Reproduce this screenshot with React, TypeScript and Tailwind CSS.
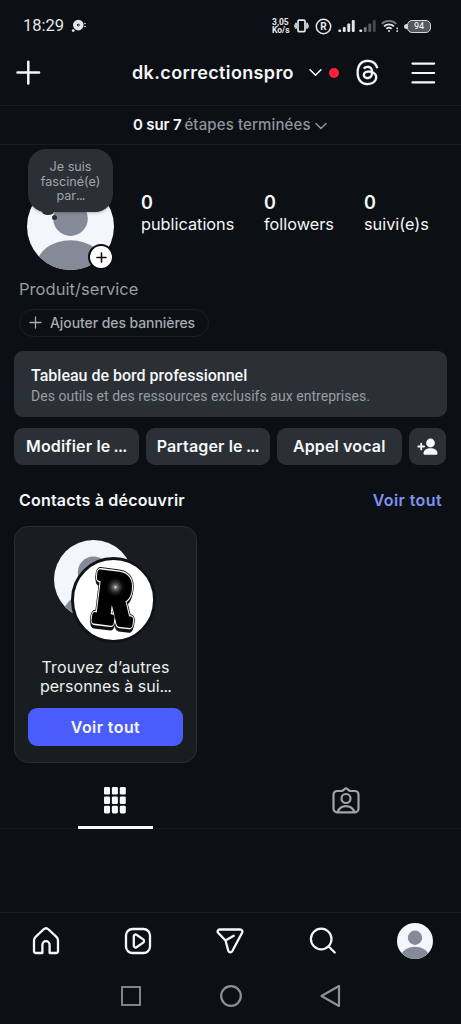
import React from 'react';
import { FaThreads } from 'react-icons/fa6';

const stats = [
    { value: '0', label: 'publications', className: 'w-[123px]' },
    { value: '0', label: 'followers', className: 'w-[100px]' },
    { value: '0', label: 'suivi(e)s', className: 'w-[70px]' },
];

const actions = [
    { label: 'Modifier le', cut: true },
    { label: 'Partager le', cut: true },
    { label: 'Appel vocal', cut: false },
];

function Avatar({ className }: { className?: string }) {
    return (
        <div className={`rounded-full overflow-hidden bg-[#f3f6fa] ${className}`}>
            <svg viewBox="0 0 88 88" className="block w-full h-full" fill="#858a99">
                <circle cx="44" cy="36" r="17.5" />
                <ellipse cx="44" cy="83" rx="34" ry="25" />
            </svg>
        </div>
    );
}

function Chevron({ className }: { className?: string }) {
    return (
        <svg viewBox="0 0 12 8" className={className} fill="none" stroke="currentColor" strokeWidth="1.5" strokeLinecap="round" strokeLinejoin="round">
            <path d="M1 1.5L6 6.5L11 1.5" />
        </svg>
    );
}

function Signal({ bars }: { bars: string[] }) {
    return (
        <svg width="17" height="14" viewBox="0 0 17 14">
            {bars.map((color, i) => (
                <rect key={i} x={0.3 + i * 4.5} y={[10.5, 8, 4.5, 1][i]} width="2.9" height={[2.5, 5, 8.5, 12][i]} rx="1" fill={color} />
            ))}
        </svg>
    );
}

function StatusBar() {
    return (
        <div className="h-[45px] pt-[7px] pl-[23px] pr-[30px] flex items-center text-[#e4e6e9] font-[Roboto,sans-serif]">
            <span className="text-[16.5px] leading-none w-[40px] pt-px">18:29</span>
            <svg className="ml-2" width="15" height="14" viewBox="0 0 15 14" fill="currentColor">
                <path fillRule="evenodd" d="M7.3 .8a5.3 5.3 0 1 1 0 10.6A5.3 5.3 0 0 1 7.3 .8zm0 3.9a1.4 1.4 0 1 0 0 2.8 1.4 1.4 0 0 0 0-2.8z" />
                <circle cx="7.3" cy="6.1" r=".7" />
                <circle cx="2.2" cy="11.6" r="1.4" />
                <circle cx="14" cy="4.5" r=".8" />
                <circle cx="14" cy="7.5" r=".8" />
            </svg>
            <div className="ml-auto flex items-center">
                <div className="w-[19px] text-[8.5px] leading-[8px] font-bold whitespace-nowrap">
                    <div>3,05</div>
                    <div>Ko/s</div>
                </div>
                <svg className="ml-[3px]" width="15" height="14" viewBox="0 0 15 14" fill="none" stroke="currentColor" strokeWidth="1.7">
                    <rect x="4" y="1.2" width="7" height="11.4" rx="1" />
                    <path d="M2 3.8v6M13 3.8v6" />
                    <path d="M.4 5.5v3M14.6 5.5v3" strokeWidth=".8" />
                </svg>
                <svg className="ml-[6px]" width="17" height="17" viewBox="0 0 17 17">
                    <circle cx="8.5" cy="8.5" r="7.2" fill="none" stroke="currentColor" strokeWidth="1.5" />
                    <text x="8.5" y="12" textAnchor="middle" fontSize="10" fontWeight="700" fill="currentColor">R</text>
                </svg>
                <div className="ml-[6px]"><Signal bars={['#e4e6e9', '#e4e6e9', '#e4e6e9', '#e4e6e9']} /></div>
                <div className="ml-[4px]"><Signal bars={['#e4e6e9', '#74777b', '#55585c', '#44474b']} /></div>
                <svg className="ml-[5px]" width="18" height="14" viewBox="0 0 18 14" fill="none" stroke="currentColor" strokeWidth="1.8">
                    <path d="M.8 4.8a10.2 10.2 0 0 1 14.4 0" stroke="#7b7e82" />
                    <path d="M3 7.4a7.1 7.1 0 0 1 10 0M5.4 9.8a3.7 3.7 0 0 1 5.2 0" />
                    <circle cx="8" cy="12" r="1" fill="currentColor" stroke="none" />
                    <path d="M16.2 8.5v1.8M16.2 11.3v1.8" strokeWidth="1.4" />
                </svg>
                <div className="ml-[5px] w-[3px] h-[5px] rounded-l bg-[#d6d8da]" />
                <div className="w-[24px] h-[13px] rounded-[5px] border-[1.5px] border-[#d6d8da] bg-[#55585c] text-[9px] leading-[11px] font-medium text-center">94</div>
            </div>
        </div>
    );
}

function Header() {
    return (
        <div className="h-[61px] pb-[5px] pl-4 pr-[25px] flex items-center border-b border-[#191d21]">
            <svg width="25" height="25" viewBox="0 0 25 25" fill="none" stroke="currentColor" strokeWidth="2.5" strokeLinecap="round">
                <path d="M12.3 1.8v21.6M1.5 12.6h21.6" />
            </svg>
            <span className="ml-[91px] w-[163px] text-[18px] font-semibold tracking-[0.36px] whitespace-nowrap">dk.correctionspro</span>
            <Chevron className="ml-[14px] w-[13px] h-[9px]" />
            <span className="ml-[7px] w-[10px] h-[10px] rounded-full bg-[#ff1f3c]" />
            <FaThreads className="ml-[15px] w-[27px] h-[27px]" stroke="currentColor" strokeWidth="3" />
            <svg className="ml-auto" width="25" height="24" viewBox="0 0 25 24" fill="none" stroke="currentColor" strokeWidth="2.2" strokeLinecap="round">
                <path d="M1.5 2.6h21.6M1.5 12h21.6M1.5 21.4h21.6" />
            </svg>
        </div>
    );
}

function ProfileHead() {
    return (
        <div className="h-[126px] pl-[27px] flex">
            <div className="relative w-[114px] pt-[38px]">
                <Avatar className="w-[87px] h-[87px]" />
                <div className="absolute left-[1px] top-1 w-[85px] h-[63px] rounded-[18px] bg-[#2b2f36] pt-[11px] text-[12.6px] leading-[14.5px] text-center text-[#a0a5ad] shadow-[0_1px_3px_rgba(0,0,0,0.25)]">
                    <div>Je suis</div>
                    <div>fasciné(e)</div>
                    <div>par<span className="tracking-[-0.8px]">...</span></div>
                </div>
                <span className="absolute left-[14px] top-[58px] w-[14px] h-[12px] rounded-full bg-[#2b2f36]" />
                <span className="absolute left-[25px] top-[70px] w-[5px] h-[5px] rounded-full bg-[#2b2f36]" />
                <span className="absolute left-[61px] top-[99px] w-[26px] h-[26px] rounded-full border-[2.5px] border-[#0c1014] bg-white flex items-center justify-center">
                    <svg width="11" height="11" viewBox="0 0 11 11" stroke="#0c1014" strokeWidth="1.6" strokeLinecap="round">
                        <path d="M5.5 1v9M1 5.5h9" />
                    </svg>
                </span>
            </div>
            <div className="flex pt-[46px]">
                {stats.map((stat) => (
                    <div key={stat.label} className={`whitespace-nowrap ${stat.className}`}>
                        <div className="text-[18px] leading-[23px] font-semibold">{stat.value}</div>
                        <div className="text-[16.3px] leading-[21px]">{stat.label}</div>
                    </div>
                ))}
            </div>
        </div>
    );
}

function DiscoverCard() {
    return (
        <div className="ml-[14px] w-[183px] h-[237px] rounded-[14px] border border-[#2a2e31] bg-[#191d20] px-[13px] flex flex-col">
            <div className="relative h-[128px]">
                <Avatar className="absolute left-[26px] top-[13px] w-[79px] h-[79px]" />
                <div className="absolute left-[43px] top-[30px] w-[85px] h-[86px] rounded-full border-[3px] border-[#0f1317] bg-white">
                    <svg viewBox="0 0 80 80" className="w-full h-full overflow-visible">
                        <defs>
                            <radialGradient id="spark">
                                <stop offset="0" stopColor="#fff" />
                                <stop offset="0.15" stopColor="#999" stopOpacity="0.8" />
                                <stop offset="0.5" stopColor="#555" stopOpacity="0.4" />
                                <stop offset="1" stopColor="#000" stopOpacity="0" />
                            </radialGradient>
                        </defs>
                        <g transform="translate(37.500 62) rotate(7) scale(.74 1.05)" fontFamily="DejaVu Serif, serif" fontWeight="700" fontSize="62" textAnchor="middle" strokeLinejoin="round">
                            <text y="3.500" stroke="#111" strokeWidth="10" fill="#111">R</text>
                            <text stroke="#111" strokeWidth="12" fill="#111">R</text>
                            <text stroke="#fff" strokeWidth="10" fill="#fff">R</text>
                            <text stroke="#000" strokeWidth="7.500" fill="#000">R</text>
                        </g>
                        <ellipse cx="42" cy="27" rx="6" ry="8" fill="#0a0a0a" />
                        <circle cx="42" cy="27" r="11" fill="url(#spark)" />
                    </svg>
                </div>
            </div>
            <div className="h-[39px] text-[16px] leading-[19px] text-center whitespace-nowrap text-[#eceef0] pt-[3px]">
                <div className="tracking-[0.15px]">Trouvez d’autres</div>
                <div>personnes à sui<span className="tracking-[-0.8px]">...</span></div>
            </div>
            <button className="mt-[14px] h-[38px] rounded-[9px] bg-[#4a5dfa] text-[16px] font-semibold tracking-[0.4px] pb-px">Voir tout</button>
        </div>
    );
}

function ProfileTabs() {
    return (
        <div className="h-[66px] flex border-b border-[#15191d]">
            <div className="flex-1 flex flex-col items-center justify-end">
                <svg className="mb-[12px]" width="22" height="27" viewBox="0 0 22 27" fill="#f7f9fb">
                    {[0, 1, 2].map((row) =>
                        [0, 1, 2].map((col) => (
                            <rect key={`${row}${col}`} x={col * 7.9} y={row * 9.4} width="6" height="7.6" rx="1.3" />
                        ))
                    )}
                </svg>
                <div className="w-[75px] h-[3px] -mb-px bg-[#f7f9fb]" />
            </div>
            <div className="flex-1 flex justify-center pt-[23px]">
                <svg width="28" height="28" viewBox="0 0 28 28" fill="none" stroke="#a0a4ab" strokeWidth="2.2" strokeLinejoin="round" strokeLinecap="round">
                    <path d="M5 5h4.5c1.5 0 1.8-.7 2.8-1.7 1.1-1.1 2.3-1.1 3.4 0 1 1 1.3 1.7 2.8 1.7H23a3.5 3.5 0 0 1 3.5 3.5v14.3a3.5 3.5 0 0 1-3.5 3.5H5a3.5 3.5 0 0 1-3.5-3.5V8.5A3.5 3.5 0 0 1 5 5z" />
                    <circle cx="14" cy="12.5" r="4.5" />
                    <path d="M5.5 26c1.7-3.8 4.8-5.8 8.5-5.8s6.8 2 8.5 5.8" />
                </svg>
            </div>
        </div>
    );
}

function BottomNav() {
    return (
        <div className="h-[57px] grid grid-cols-5 place-items-center border-t border-[#191d21]">
            <svg width="28" height="28" viewBox="0 0 28 28" fill="none" stroke="currentColor" strokeWidth="2.3" strokeLinejoin="round">
                <path d="M10.4 26H4a2 2 0 0 1-2-2V13.5c0-1.5.5-2.7 1.6-3.7l7.8-7.3c1.5-1.4 3.7-1.4 5.2 0l7.8 7.3c1.1 1 1.6 2.2 1.6 3.7V24a2 2 0 0 1-2 2h-6.4v-8.2a3.6 3.6 0 0 0-7.2 0z" />
            </svg>
            <svg width="28" height="28" viewBox="0 0 28 28" fill="none" stroke="currentColor" strokeWidth="2.3" strokeLinejoin="round">
                <rect x="2" y="2" width="24" height="24" rx="6.5" />
                <path d="M9.8 9.3c0-1.5 1.4-2.3 2.7-1.5l6.7 4.6c1.1.8 1.1 2.4 0 3.2l-6.7 4.6c-1.3.8-2.7 0-2.7-1.5z" />
            </svg>
            <svg width="28" height="28" viewBox="0 0 28 28" fill="none" stroke="currentColor" strokeWidth="2.3" strokeLinejoin="round" strokeLinecap="round">
                <path d="M3.8 2.5h20.4c1.7 0 2.7 1.7 1.9 3.2L16.2 24.3c-.9 1.6-3.4 1.3-3.9-.5L9.5 13.5 2.3 6C.9 4.6 1.8 2.5 3.8 2.5zM9.5 13.5l8.2-4.7" />
            </svg>
            <svg width="28" height="28" viewBox="0 0 28 28" fill="none" stroke="currentColor" strokeWidth="2.2" strokeLinecap="round">
                <circle cx="12.2" cy="12" r="10.3" />
                <path d="M19.6 19.5l6.2 6" />
            </svg>
            <Avatar className="w-[36px] h-[36px]" />
        </div>
    );
}

export default function App() {
    return (
        <div className="w-[461px] h-[1024px] bg-[#0c1014] text-[#f5f7f9] font-[Inter,sans-serif] flex flex-col overflow-hidden">
            <StatusBar />
            <Header />
            <div className="h-[39px] pt-px pl-[133px] flex items-center border-b border-[#191d21] text-[15px] font-semibold whitespace-nowrap">
                <span className="tracking-[-0.15px]">0 sur 7</span>
                <span className="ml-[3px] w-[128px] font-medium tracking-[0.12px] text-[#8f949d]">étapes terminées</span>
                <Chevron className="ml-[3px] w-[12px] h-[8px] text-[#8f949d]" />
            </div>

            <ProfileHead />

            <div className="mt-[7px] pl-[19px] h-[22px] text-[16.5px] leading-[22px] tracking-[0.05px] text-[#989ca4]">Produit/service</div>
            <button className="mt-[9px] ml-[19px] w-[190px] h-[28px] rounded-full border border-[#1b1f25] flex items-center pb-px pl-[9px] text-[14px] font-medium tracking-[-0.08px] text-[#a6aab1] whitespace-nowrap">
                <svg className="mr-[8px]" width="13" height="13" viewBox="0 0 13 13" stroke="currentColor" strokeWidth="1.3" strokeLinecap="round">
                    <path d="M6.5 1v11M1 6.5h11" />
                </svg>
                Ajouter des bannières
            </button>

            <div className="mt-[14px] mx-[14px] h-[66px] rounded-[9px] bg-[#2b3036] pl-[17px] pt-[14px] font-[Roboto,sans-serif] whitespace-nowrap">
                <div className="text-[16px] leading-[21px] font-medium">Tableau de bord professionnel</div>
                <div className="text-[14px] leading-[20px] tracking-[0.04px] text-[#989da5]">Des outils et des ressources exclusifs aux entreprises.</div>
            </div>

            <div className="mt-[11px] pl-[14px] flex gap-[7px]">
                {actions.map((action) => (
                    <button key={action.label} className="w-[124.5px] h-[37px] rounded-[9px] bg-[#2b3036] pb-px text-[16px] font-semibold tracking-[0.15px] whitespace-nowrap">
                        {action.label}
                        {action.cut && <span className="tracking-[-0.8px]"> ...</span>}
                    </button>
                ))}
                <button className="w-[37px] h-[37px] rounded-[9px] bg-[#2b3036] flex items-center justify-center">
                    <svg width="21" height="18" viewBox="0 0 21 18" fill="currentColor">
                        <circle cx="13.5" cy="5" r="4.4" />
                        <path d="M6.5 15.5c0-3.5 3.2-5.3 7-5.3s7 1.8 7 5.3c0 .9-.6 1.3-1.4 1.3H7.9c-.8 0-1.4-.4-1.4-1.3z" />
                        <path d="M1.3 8.5h5.8M4.2 5.6v5.8" stroke="currentColor" strokeWidth="1.8" strokeLinecap="round" />
                    </svg>
                </button>
            </div>

            <div className="mt-[23px] h-[24px] px-[19px] flex items-center justify-between text-[16px] font-semibold whitespace-nowrap">
                <span className="tracking-[0.2px]">Contacts à découvrir</span>
                <span className="tracking-[0.4px] text-[#7f92f2]">Voir tout</span>
            </div>

            <div className="mt-[14px]">
                <DiscoverCard />
            </div>

            <ProfileTabs />
            <div className="flex-1" />
            <BottomNav />

            {/* android system keys */}
            <div className="h-[55px] pl-px pb-px flex items-center justify-center gap-[78px] text-[#8d9095]">
                <svg width="22" height="22" viewBox="0 0 22 22" fill="none" stroke="currentColor" strokeWidth="1.8">
                    <rect x="2" y="2" width="18" height="18" />
                </svg>
                <svg width="22" height="22" viewBox="0 0 22 22" fill="none" stroke="currentColor" strokeWidth="2.2">
                    <circle cx="11" cy="11" r="9.8" />
                </svg>
                <svg width="22" height="24" viewBox="0 0 22 24" fill="none" stroke="currentColor" strokeWidth="2.2" strokeLinejoin="round">
                    <path d="M19 2v20L1.500 12z" />
                </svg>
            </div>
        </div>
    );
}
